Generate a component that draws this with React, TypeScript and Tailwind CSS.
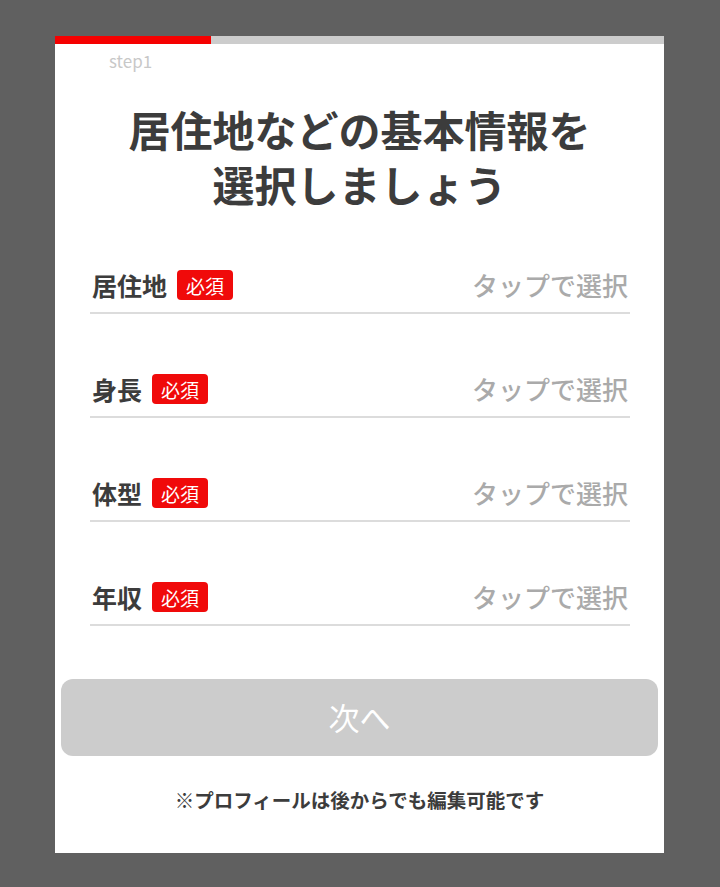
import React from "react";

const FONT = { fontFamily: '"Noto Sans CJK JP", "Noto Sans", sans-serif' };

const rows = ["居住地", "身長", "体型", "年収"];

export default function App() {
  return (
    <div className="min-h-[887px] w-[720px] bg-[#606060] pt-[36px]" style={FONT}>
      <div className="ml-[55px] flex h-[817px] w-[609px] flex-col bg-white">
        <div className="h-[8px] w-full bg-[#cccccc]">
          <div className="h-full w-[156px] bg-[#f50000]" />
        </div>
        <div className="mt-[6px] h-[22px] pl-[54px] text-[17px] leading-[22px] text-[#c8c8c8]">step1</div>
        <h1 className="mt-[29px] text-center text-[42px] font-semibold leading-[55px] text-[#3c3c3c]">
          居住地などの基本情報を
          <br />
          選択しましょう
        </h1>
        <div className="mt-[49px] flex flex-col gap-[50px] pl-[35px] pr-[34px]">
          {rows.map((r) => (
            <div key={r} className="flex h-[54px] items-center border-b-2 border-[#dcdcdc] pb-[2px]">
              <span className="ml-[2px] text-[25px] font-bold leading-[30px] text-[#3c3c3c]">{r}</span>
              <span className="ml-[10px] flex h-[30px] w-[56px] items-center justify-center rounded-[4px] bg-[#f00a0a] text-[19px] leading-none text-white">
                必須
              </span>
              <span className="ml-auto mr-[2px] text-[26px] font-medium leading-[30px] text-[#aaaaaa]">タップで選択</span>
            </div>
          ))}
        </div>
        <button className="mx-[6px] mt-[53px] flex h-[77px] items-center justify-center rounded-[12px] bg-[#cccccc] text-[31px] text-white">
          次へ
        </button>
        <p className="mt-[30px] text-center text-[19.5px] font-bold leading-[28px] text-[#3c3c3c]">
          ※プロフィールは後からでも編集可能です
        </p>
      </div>
    </div>
  );
}
